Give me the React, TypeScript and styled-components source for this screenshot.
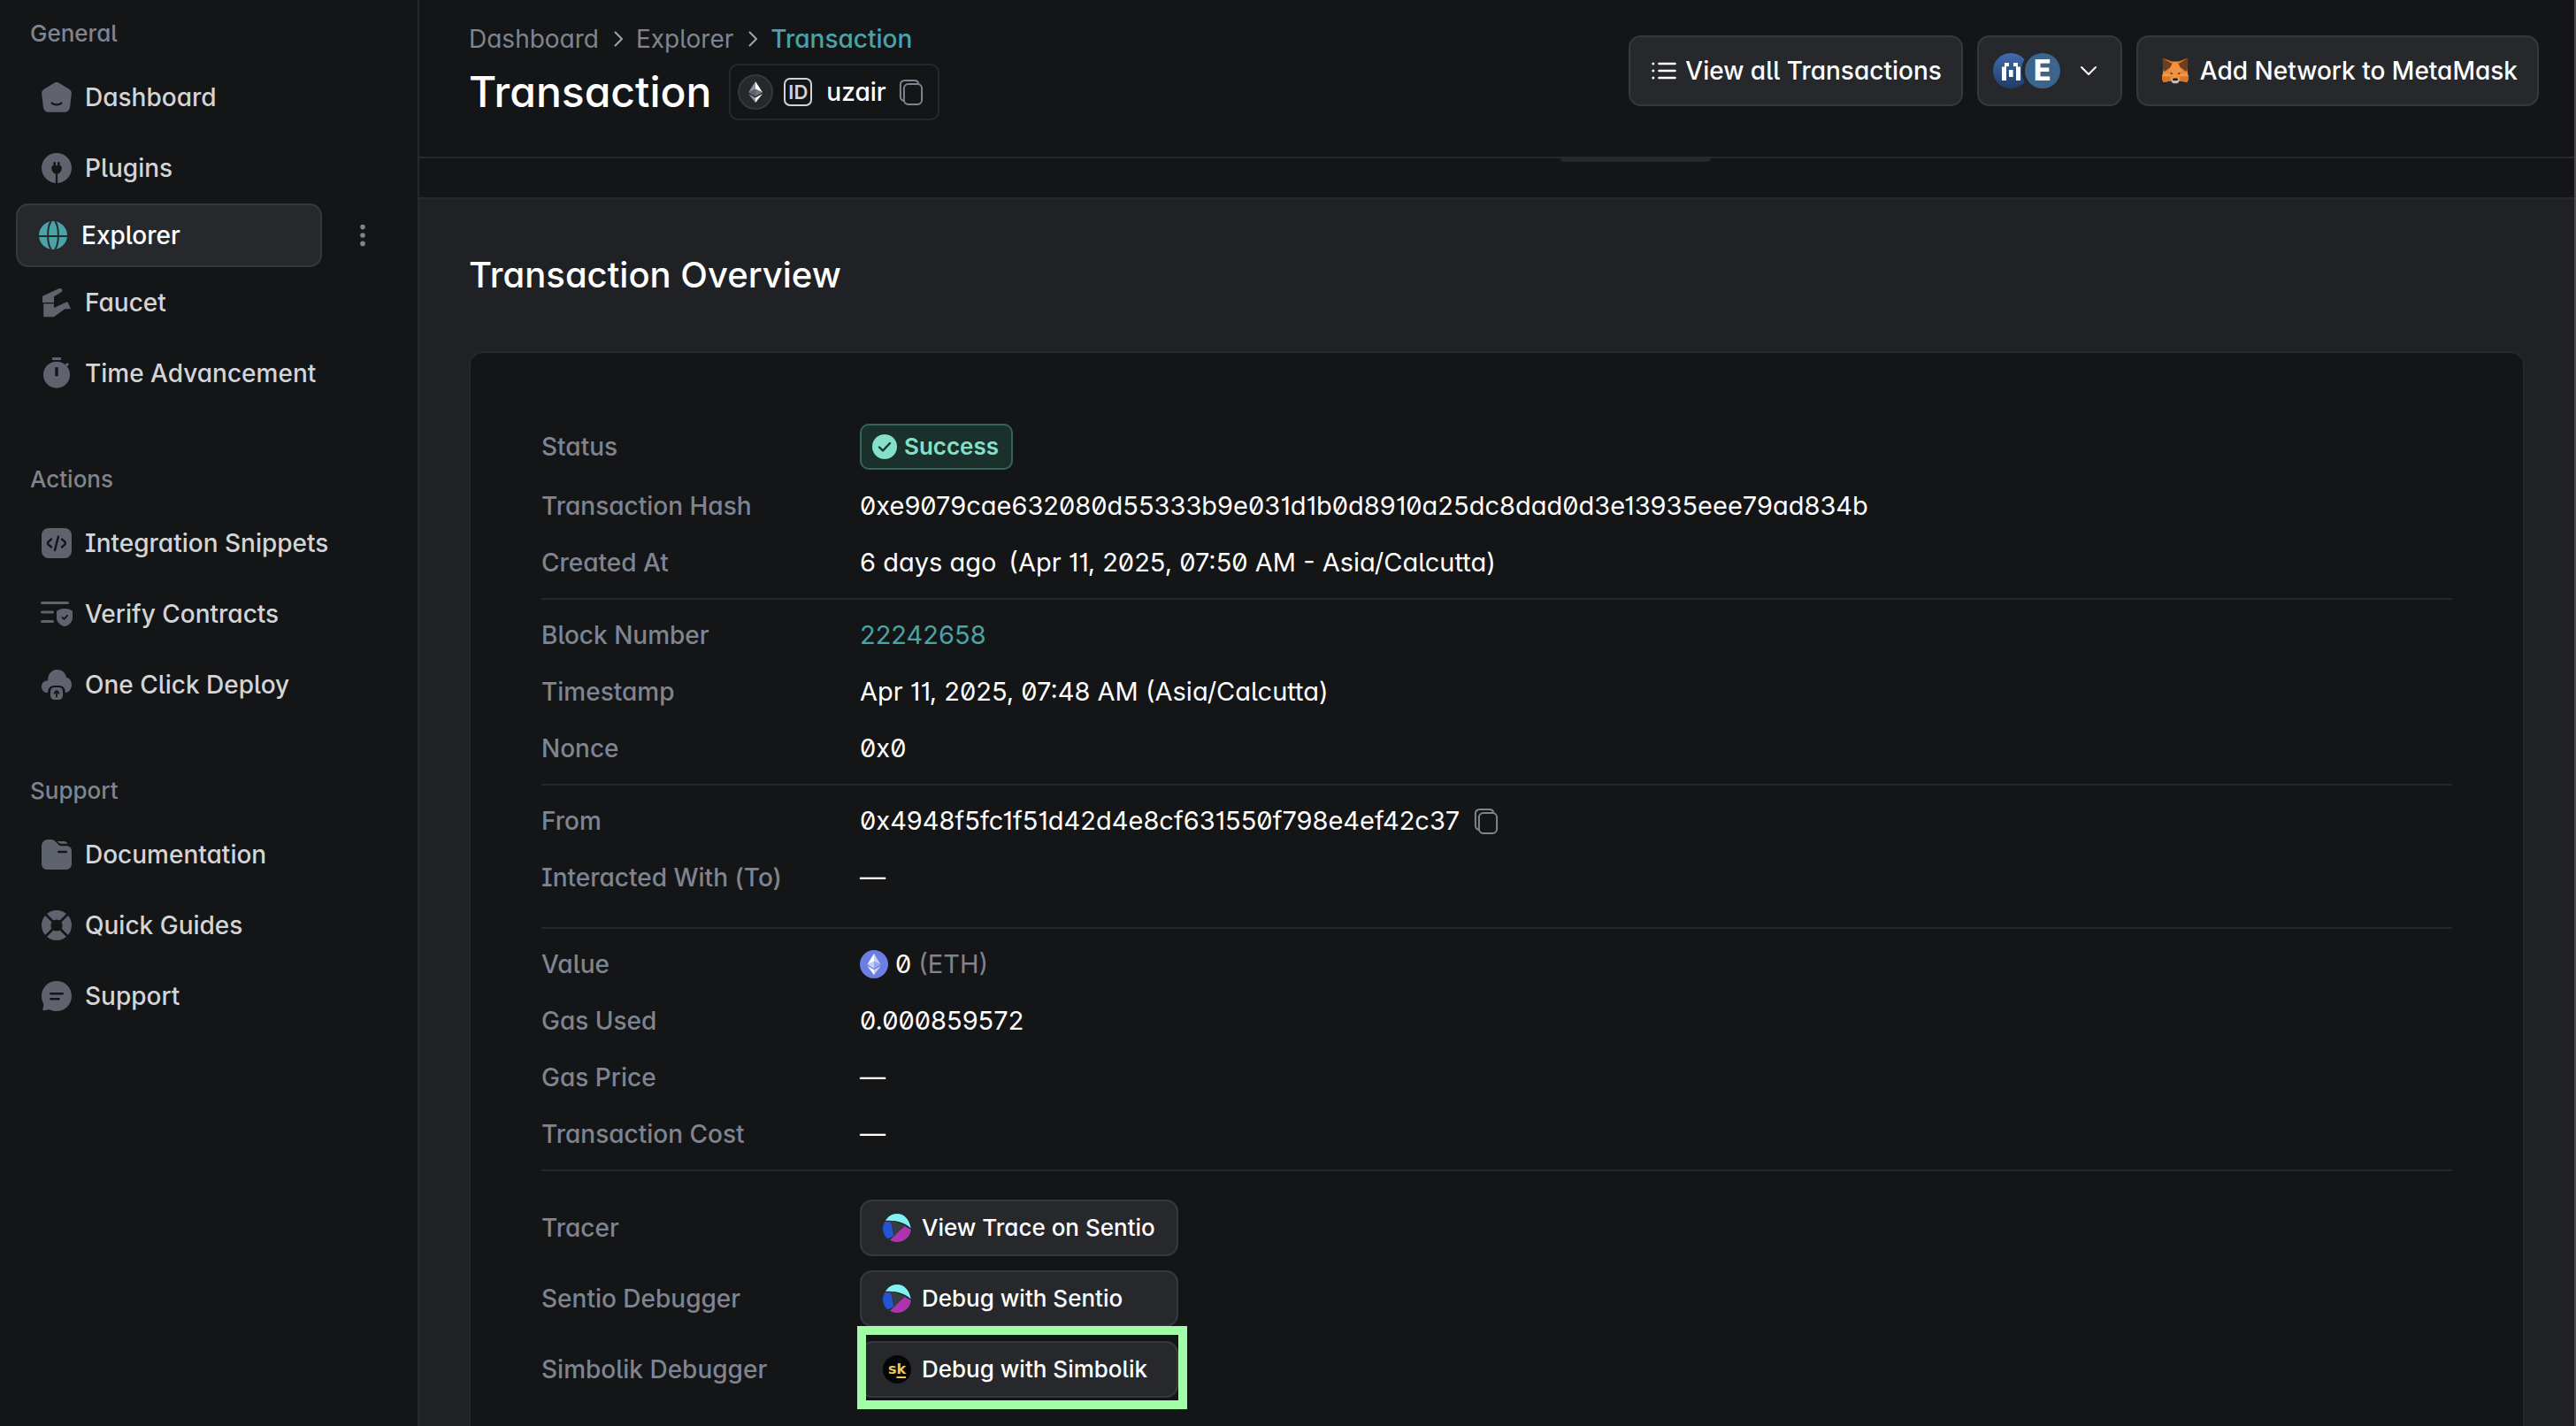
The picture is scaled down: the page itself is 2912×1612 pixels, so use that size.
import React from 'react';
import styled, { createGlobalStyle, css } from 'styled-components';

const color = {
  bg: '#141517',
  surface: '#27282c',
  content: '#202125',
  line: '#27282b',
  edge: '#37383e',
  icon: '#5f636e',
  muted: '#7f8490',
  text: '#d3d4d6',
  white: '#ffffff',
  teal: '#4aa3a6',
  mint: '#85e0cb',
};

const GlobalStyle = createGlobalStyle`
  *, *::before, *::after { box-sizing: border-box; }
  body {
    margin: 0;
    background: ${color.bg};
    color: ${color.white};
    font-family: Inter, "Noto Sans", sans-serif;
    font-size: 28px;
    font-weight: 400;
    line-height: 40px;
    font-feature-settings: 'cv11', 'zero', 'cv01', 'cv05', 'cv08';
  }
  button {
    font: inherit;
    font-feature-settings: inherit;
    color: inherit;
    cursor: pointer;
  }
  a { color: inherit; text-decoration: none; }
  h1, h2, p, ul, ol, dl, dd { margin: 0; padding: 0; }
  ul, ol { list-style: none; }
  svg { display: block; flex: none; }
`;

const Shell = styled.div`
  display: grid;
  grid-template-columns: 474px minmax(0, 1fr);
  height: 100vh;
  overflow: hidden;
  border-right: 2px solid #4b4956;
`;

/* ---------- Sidebar ---------- */

const Sidebar = styled.nav`
  display: flex;
  flex-direction: column;
  gap: 64px;
  padding-top: 22px;
  border-right: 2px solid ${color.line};
`;

const NavTitle = styled.h2`
  margin-bottom: 16px;
  padding-left: 34px;
  font-size: 26px;
  font-weight: 500;
  line-height: 32px;
  color: ${color.muted};
`;

const NavRow = styled.li`
  display: flex;
  align-items: center;
  padding-left: 18px;
`;

const NavLink = styled.a<{ $active?: boolean }>`
  display: flex;
  align-items: center;
  flex: none;
  width: 346px;
  height: 80px;
  gap: 14px;
  padding-left: 28px;
  font-weight: 500;
  color: ${color.text};
  white-space: nowrap;

  > svg { color: ${color.icon}; }

  ${p => p.$active && css`
    height: 72px;
    gap: 16px;
    padding-left: 24px;
    border: 2px solid ${color.edge};
    border-radius: 14px;
    background: ${color.surface};
    color: ${color.white};
    > svg { color: ${color.teal}; }
  `}
`;

const IconButton = styled.button`
  display: flex;
  align-items: center;
  justify-content: center;
  width: 32px;
  height: 32px;
  padding: 0;
  border: 0;
  background: none;
  color: ${color.muted};
`;

const MoreButton = styled(IconButton)`
  margin-left: 30px;
`;

/* ---------- Header ---------- */

const Main = styled.main`
  display: flex;
  flex-direction: column;
  min-width: 0;
  min-height: 0;
`;

const Header = styled.header`
  display: flex;
  justify-content: space-between;
  align-items: flex-start;
  flex: none;
  height: 179px;
  padding: 24px 40px 0 56px;
  border-bottom: 2px solid ${color.line};
`;

const Crumbs = styled.ol`
  display: flex;
  align-items: center;
  gap: 12px;
  color: ${color.muted};
`;

const Crumb = styled.li<{ $current?: boolean }>`
  display: flex;
  align-items: center;
  gap: 14px;
  ${p => p.$current && css`
    font-weight: 500;
    color: ${color.teal};
  `}
`;

const TitleRow = styled.div`
  display: flex;
  align-items: center;
  gap: 20px;
  margin-top: 8px;
`;

const Title = styled.h1`
  font-size: 48px;
  font-weight: 500;
  line-height: 64px;
`;

const Chip = styled.div`
  display: flex;
  align-items: center;
  height: 64px;
  gap: 12px;
  padding: 0 14px 0 8px;
  border: 2px solid ${color.line};
  border-radius: 10px;
  font-weight: 500;
`;

const ChipName = styled.span`
  padding-left: 4px;
`;

const ChainBadge = styled.span`
  display: flex;
  align-items: center;
  justify-content: center;
  width: 40px;
  height: 40px;
  border: 2px solid ${color.edge};
  border-radius: 50%;
  background: ${color.surface};
`;

const IdBadge = styled.span`
  display: flex;
  align-items: center;
  justify-content: center;
  width: 32px;
  height: 32px;
  border: 2px solid ${color.text};
  border-radius: 7px;
  font-size: 22px;
  font-weight: 600;
  line-height: 28px;
  color: ${color.text};
  font-feature-settings: normal;
`;

const Actions = styled.div`
  display: flex;
  gap: 16px;
  padding-top: 16px;
`;

const Button = styled.button<{ $compact?: boolean }>`
  display: flex;
  align-items: center;
  gap: ${p => (p.$compact ? '12px' : '8px')};
  height: ${p => (p.$compact ? '64px' : '80px')};
  width: ${p => (p.$compact ? '360px' : 'auto')};
  padding: 0 ${p => (p.$compact ? '24px' : '22px')};
  border: 2px solid ${color.edge};
  border-radius: 14px;
  background: ${color.surface};
  font-size: ${p => (p.$compact ? '26px' : '28px')};
  font-weight: 500;
  color: ${color.white};
  white-space: nowrap;
`;

const PickerButton = styled(Button)`
  gap: 20px;
  padding: 0 24px 0 16px;
`;

const Avatars = styled.span`
  display: flex;
`;

const Avatar = styled.span<{ $tone: string }>`
  display: flex;
  align-items: center;
  justify-content: center;
  width: 40px;
  height: 40px;
  border-radius: 50%;
  background: ${p => p.$tone};
  font-size: 32px;
  font-weight: 800;
  line-height: 40px;

  & + & {
    margin-left: -4px;
    box-shadow: 0 0 0 4px ${color.surface};
  }
`;

/* ---------- Content ---------- */

const TabStrip = styled.div`
  display: flex;
  justify-content: center;
  flex: none;
  height: 46px;
  padding-left: 314px;
  border-bottom: 2px solid ${color.line};
`;

const TabEnd = styled.span`
  width: 170px;
  height: 4px;
  border-radius: 0 0 8px 8px;
  background: ${color.line};
`;

const Content = styled.section`
  flex: 1;
  min-height: 0;
  padding: 60px 56px;
  overflow: hidden auto;
  scrollbar-width: none;
  background: ${color.content};
`;

const SectionTitle = styled.h2`
  margin-bottom: 60px;
  font-size: 40px;
  font-weight: 500;
  line-height: 52px;
`;

const Card = styled.div`
  padding: 63px 80px;
  border: 2px solid ${color.line};
  border-radius: 16px;
  background: ${color.bg};
`;

const Group = styled.dl<{ $roomy?: boolean; $actions?: boolean }>`
  padding: 8px 0 ${p => (p.$roomy ? '24px' : '8px')};

  & + & { border-top: 2px solid ${color.line}; }

  ${p => p.$actions && css`
    display: grid;
    gap: 16px;
    padding-top: 32px;
  `}
`;

const Row = styled.div<{ $tall?: boolean }>`
  display: grid;
  grid-template-columns: 360px minmax(0, 1fr);
  align-items: center;
  min-height: ${p => (p.$tall ? '70px' : '64px')};
`;

const Label = styled.dt`
  font-weight: 500;
  color: ${color.muted};
`;

const Value = styled.dd`
  display: flex;
  align-items: center;
  gap: 14px;
  font-size: 29px;
  white-space: nowrap;
`;

const Amount = styled(Value)`
  gap: 8px;
`;

const Unit = styled.span`
  color: ${color.muted};
`;

const BlockLink = styled.a`
  color: ${color.teal};
`;

const StatusBadge = styled.span`
  display: flex;
  align-items: center;
  gap: 8px;
  height: 52px;
  padding: 0 14px 0 12px;
  border: 2px solid #376359;
  border-radius: 10px;
  background: #19302b;
  font-size: 26px;
  font-weight: 600;
  color: ${color.mint};
`;

const Highlighted = styled.div`
  position: relative;

  &::after {
    content: '';
    position: absolute;
    top: -17px;
    right: -10px;
    bottom: -13px;
    left: -3px;
    border: 10px solid #a2fda8;
    pointer-events: none;
  }
`;

const SimbolikMark = styled.span`
  display: flex;
  align-items: center;
  justify-content: center;
  width: 32px;
  height: 32px;
  border-radius: 50%;
  background: #060606;
  font-family: "DejaVu Sans", sans-serif;
  font-size: 16px;
  font-weight: 700;
  line-height: 20px;
  color: #f4c64a;

  u {
    text-decoration-thickness: 2px;
    text-underline-offset: 3px;
  }
  i {
    font-style: normal;
  }
`;

/* ---------- Icons ---------- */

type IconProps = { size?: number; box?: string; children: React.ReactNode };
const Icon = ({ size = 36, box = '0 0 36 36', children }: IconProps) => (
  <svg width={size} height={size} viewBox={box} fill="none" aria-hidden="true">
    {children}
  </svg>
);

const HomeIcon = () => (
  <Icon>
    <path fill="currentColor" d="M14.6 2.2a6 6 0 0 1 6.8 0l10.4 6.4c2.4 1.500 3.300 3.200 3 5.900l-1.600 13.700c-.6 4.600-2.600 6.500-7.200 6.500H10c-4.600 0-6.600-1.900-7.200-6.500L1.200 14.500c-.3-2.700.6-4.400 3-5.900z" />
    <path stroke={color.bg} strokeWidth="2.400" strokeLinecap="round" d="M12.800 24.600c3 2.200 7.400 2.200 10.400 0" />
  </Icon>
);

const PluginIcon = () => (
  <Icon>
    <circle cx="18" cy="18" r="17" fill="currentColor" />
    <path fill={color.bg} d="M12.200 17.200c0-1.200.9-2 2-2h.2v-3a1.300 1.300 0 0 1 2.600 0v3h2v-3a1.300 1.300 0 0 1 2.600 0v3h.2c1.100 0 2 .8 2 2 0 4-1.800 6.600-4.700 7.200V36h-2.200V24.400c-2.900-.6-4.700-3.200-4.700-7.200z" />
  </Icon>
);

const GlobeIcon = () => (
  <Icon size={32} box="0 0 32 32">
    <circle cx="16" cy="16" r="16" fill="currentColor" />
    <path stroke={color.surface} strokeWidth="2" d="M0 17h32M14 0C8.800 6 8.800 26 14 32M18 0c5.200 6 5.200 26 0 32" />
  </Icon>
);

const FaucetIcon = () => (
  <Icon>
    <path fill="currentColor" d="M2 10.800 20.500 2.200c1.500-.8 3 0 4 1.200-.2 1.800-1 2.600-2.200 3.300L15 11.200V18H2zM3.200 19.200H15V24l14.500-6.800 1.500 1 3 7h-6.600L14.800 34.200H3.200z" />
  </Icon>
);

const TimerIcon = () => (
  <Icon>
    <circle cx="18" cy="19.700" r="15" fill="currentColor" />
    <path fill="currentColor" d="M13 0h10v3H13zM27.500 8.300l2.400-2.400 2.200 2.200-2.400 2.400z" />
    <path fill={color.bg} d="M16.300 11.200h3.400v10h-3.400z" />
  </Icon>
);

const CodeIcon = () => (
  <Icon>
    <rect x="1" y="1" width="34" height="34" rx="8" fill="currentColor" />
    <path stroke={color.bg} strokeWidth="2.400" strokeLinecap="round" strokeLinejoin="round" d="m12 13.500-3.200 2.800c-1 1-1 2.400 0 3.400L12 22.500M24 13.500l3.200 2.800c1 1 1 2.400 0 3.400L24 22.500M20 10.500l-4 15.500" />
  </Icon>
);

const VerifyIcon = () => (
  <Icon>
    <path stroke="currentColor" strokeWidth="3" strokeLinecap="round" d="M1.500 5.500h29M1.500 16h12M1.500 26.500h12" />
    <path fill="currentColor" d="M27 12c3.600 0 9 1.600 9 3.800v7c0 4-4.600 9.200-9 9.200s-9-5.200-9-9.200v-7C18 13.600 23.400 12 27 12z" />
    <path stroke={color.bg} strokeWidth="1.800" strokeLinecap="round" strokeLinejoin="round" d="m24.500 22 2 1.900 3.500-4" />
  </Icon>
);

const DeployIcon = () => (
  <Icon>
    <path fill="currentColor" d="M18.500 1c5.600 0 9.900 3.600 10.300 8.800 3.700.6 6.200 4 6.200 8.200 0 4.600-2.800 8.500-7 9.200-.2-5.600-2.800-8.200-8.300-8.200h-3.400c-5.500 0-8 2.600-8.300 8.200C3.800 27.200 1 24.200 1 20.200c0-3.800 2.800-6.700 7.200-6.900C7.800 6 12.500 1 18.500 1z" />
    <rect x="11" y="21" width="14" height="14" rx="4.500" fill="currentColor" />
    <path stroke={color.bg} strokeWidth="1.800" strokeLinecap="round" strokeLinejoin="round" d="M18 31.500v-6M15.500 27.500l2.500-2.500 2.500 2.500" />
  </Icon>
);

const FolderIcon = () => (
  <Icon>
    <path fill="currentColor" d="M1 9c0-5 3-8 7.500-8h2.800c2.800 0 4.400 1 6 3l2.500 2.600c1 1.200 2 1.600 3.600 1.600h5.200C33 8.200 35 10.500 35 14v14c0 4.600-2.400 7-7 7H8c-4.600 0-7-2.400-7-7z" />
    <path fill="currentColor" d="M18.500 3H26c2.200 0 3.600.8 4 3-1.500-.3-3.200-.3-5.400-.3-2 0-2.800.1-3.800-.7z" />
    <path stroke={color.bg} strokeWidth="2.400" strokeLinecap="round" d="M20.200 15h8.600" />
  </Icon>
);

const BuoyIcon = () => (
  <Icon>
    <circle cx="18" cy="18" r="11.800" stroke="currentColor" strokeWidth="10.400" />
    <path stroke={color.bg} strokeWidth="2.600" d="m5 5 26 26M31 5 5 31" />
  </Icon>
);

const ChatIcon = () => (
  <Icon>
    <path fill="currentColor" d="M18 1c9.600 0 17 7.400 17 17s-7.400 17-17 17c-2.600 0-5-.6-7.600-1.600-2.200-.6-4.600 1-6.800.8-1.200-.2-1.600-1-1.200-2.200.6-2 1.300-3.800.6-5.800C1.600 23.600 1 21 1 18 1 8.400 8.400 1 18 1z" />
    <path stroke={color.bg} strokeWidth="2.400" strokeLinecap="round" d="M11.200 15.300h13.600M11.200 21.300h9.400" />
  </Icon>
);

const DotsIcon = () => (
  <Icon size={32} box="0 0 32 32">
    <g fill="currentColor">
      <circle cx="16" cy="6.600" r="2.800" />
      <circle cx="16" cy="16" r="2.800" />
      <circle cx="16" cy="25.400" r="2.800" />
    </g>
  </Icon>
);

const CrumbArrow = () => (
  <svg width="16" height="20" viewBox="0 0 16 20" fill="none" aria-hidden="true">
    <path stroke="#a3a5ab" strokeWidth="2" strokeLinecap="round" strokeLinejoin="round" d="m4.500 2.500 7.500 7.500-7.500 7.500" />
  </svg>
);

const ChevronDown = () => (
  <Icon size={24} box="0 0 24 24">
    <path stroke={color.white} strokeWidth="2" strokeLinecap="round" strokeLinejoin="round" d="m4 8 8 8 8-8" />
  </Icon>
);

const CopyIcon = () => (
  <Icon size={32} box="0 0 32 32">
    <path stroke="currentColor" strokeWidth="2" strokeLinejoin="round" d="M7.800 26C5 25.500 3.900 24 3.900 21V8c0-3.400 1.700-5.100 5.100-5.100h10.500c2.800 0 4.300 1 4.900 3.600" />
    <rect x="7.900" y="6.900" width="20.200" height="23.200" rx="5" stroke="currentColor" strokeWidth="2" />
  </Icon>
);

const ListIcon = () => (
  <Icon size={32} box="0 0 32 32">
    <path stroke={color.white} strokeWidth="2.600" strokeLinecap="round" d="M10.500 8h18M10.500 16h18M10.500 24h18" />
    <g fill={color.white}>
      <circle cx="3.800" cy="8" r="1.500" />
      <circle cx="3.800" cy="16" r="1.500" />
      <circle cx="3.800" cy="24" r="1.500" />
    </g>
  </Icon>
);

const EthGlyph = () => (
  <svg width="16" height="24" viewBox="0 0 16 24" aria-hidden="true">
    <path fill="#8e93a6" d="M8 0 0 12.400 8 8.800z" />
    <path fill="#fff" d="m8 0 8 12.400-8-3.600z" />
    <path fill="#5f636e" d="M8 8.800 0 12.400 8 17z" />
    <path fill="#6d7180" d="m8 8.800 8 3.600L8 17z" />
    <path fill="#8e93a6" d="M0 14 8 24v-5.400z" />
    <path fill="#fff" d="M16 14 8 24v-5.400z" />
  </svg>
);

const EthCoin = () => (
  <Icon size={32} box="0 0 32 32">
    <circle cx="16" cy="16" r="16" fill="#6b7fe3" />
    <path fill="#fff" d="M16 4 8.500 16.300 16 12.900z" />
    <path fill="#c9d0f6" d="m16 4 7.500 12.300L16 12.900z" />
    <path fill="#c9d0f6" d="m16 12.900-7.500 3.400L16 20.700z" />
    <path fill="#98a6ed" d="m16 12.900 7.500 3.400L16 20.700z" />
    <path fill="#fff" d="m8.500 17.900 7.500 10.300v-6z" />
    <path fill="#c9d0f6" d="M23.500 17.900 16 28.200v-6z" />
  </Icon>
);

const CheckCircle = () => (
  <Icon size={28} box="0 0 28 28">
    <circle cx="14" cy="14" r="14" fill={color.mint} />
    <path stroke="#19302b" strokeWidth="2.400" strokeLinecap="round" strokeLinejoin="round" d="m8 14.500 4 4 8-8.500" />
  </Icon>
);

const NetworkLogo = () => (
  <Icon size={40} box="0 0 40 40">
    <path fill={color.white} d="M10 31V15.500h3V11h5v4h-3v16zM31 31V15.500h-3V11h-5v4h3v16zM18 19h4.600v8H18z" />
  </Icon>
);

const FoxIcon = () => (
  <svg width="40" height="30" viewBox="-5 0 40 30" aria-hidden="true">
    <path fill="#e8883a" d="M3 4.500h24l2.500 15.500.5 4-1.500 4-8.500-1.500-5 2-5-2L1.500 28 0 24l.500-4z" />
    <path fill="#f0923f" d="M11 5h8l3 10-2.500 9h-9L8 15z" />
    <path fill="#6d3f1f" d="M.600.800 12 5.500 9.500 11 2.800 16 1 12.500z" />
    <path fill="#6d3f1f" d="M29.400.800 18 5.500l2.500 5.500 6.700 5 1.800-3.500z" />
    <path fill="#e2761b" d="M.600.500 12.500 5 11 7zM29.400.500 17.500 5 19 7z" />
    <path fill="#d9762c" d="m0 20.500 9 .5 1 5.500L1.500 28 0 24zM30 20.500l-9 .5-1 5.500 8.500 1.500 1.500-4z" />
    <path fill="#f39a4a" d="m2.500 17.500 7.500 1.500-1 2.500-9-.5zM27.500 17.500 20 19l1 2.500 9-.5z" />
    <path fill="#4a3420" d="m9.500 16.500 3.200 1.800-2.700.9zM20.500 16.500l-3.200 1.800 2.700.9z" />
    <path fill="#cbbcae" d="M10 24.500h10l-1.200 3.800-1.800.9h-4l-1.800-.9z" />
    <path fill="#1b1b1b" d="M12.600 23.400h4.800l.7 2.600h-6.200z" />
  </svg>
);

const SentioIcon = () => (
  <Icon size={32} box="0 0 32 32">
    <path fill="#393b43" d="M9 7.500 27 14 13 26z" />
    <path fill="#7df3f5" d="M3 8C5.500 3 10.500 0 16 0c8 0 13.500 5.500 15.800 16.500C25 10.500 15 7 3 8z" />
    <path fill="#2455d0" d="M2.500 9h5c1 0 1.600.500 1.900 1.500L12.500 25 5.800 28.500C1.500 25.500 0 21 0 16.500 0 13.500.9 11 2.500 9z" />
    <path fill="#ad33b0" d="M24.500 14.200 31.900 18C31 26 24.500 32 16 32c-3 0-5.700-.9-8-2.300z" />
  </Icon>
);

/* ---------- Page ---------- */

type NavItem = { label: string; icon: React.ReactNode; active?: boolean };

const navigation: { title: string; items: NavItem[] }[] = [
  {
    title: 'General',
    items: [
      { label: 'Dashboard', icon: <HomeIcon /> },
      { label: 'Plugins', icon: <PluginIcon /> },
      { label: 'Explorer', icon: <GlobeIcon />, active: true },
      { label: 'Faucet', icon: <FaucetIcon /> },
      { label: 'Time Advancement', icon: <TimerIcon /> },
    ],
  },
  {
    title: 'Actions',
    items: [
      { label: 'Integration Snippets', icon: <CodeIcon /> },
      { label: 'Verify Contracts', icon: <VerifyIcon /> },
      { label: 'One Click Deploy', icon: <DeployIcon /> },
    ],
  },
  {
    title: 'Support',
    items: [
      { label: 'Documentation', icon: <FolderIcon /> },
      { label: 'Quick Guides', icon: <BuoyIcon /> },
      { label: 'Support', icon: <ChatIcon /> },
    ],
  },
];

const Field = ({ label, children }: { label: string; children: React.ReactNode }) => (
  <Row>
    <Label>{label}</Label>
    <Value>{children}</Value>
  </Row>
);

export default function App() {
  return (
    <>
      <GlobalStyle />
      <Shell>
        <Sidebar aria-label="Main">
          {navigation.map(section => (
            <div key={section.title}>
              <NavTitle>{section.title}</NavTitle>
              <ul>
                {section.items.map(item => (
                  <NavRow key={item.label}>
                    <NavLink href="#" $active={item.active} aria-current={item.active ? 'page' : undefined}>
                      {item.icon}
                      {item.label}
                    </NavLink>
                    {item.active && (
                      <MoreButton aria-label="More options">
                        <DotsIcon />
                      </MoreButton>
                    )}
                  </NavRow>
                ))}
              </ul>
            </div>
          ))}
        </Sidebar>

        <Main>
          <Header>
            <div>
              <Crumbs>
                <Crumb><a href="#">Dashboard</a><CrumbArrow /></Crumb>
                <Crumb><a href="#">Explorer</a><CrumbArrow /></Crumb>
                <Crumb $current><a href="#" aria-current="page">Transaction</a></Crumb>
              </Crumbs>
              <TitleRow>
                <Title>Transaction</Title>
                <Chip>
                  <ChainBadge><EthGlyph /></ChainBadge>
                  <IdBadge>ID</IdBadge>
                  <ChipName>uzair</ChipName>
                  <IconButton aria-label="Copy ID"><CopyIcon /></IconButton>
                </Chip>
              </TitleRow>
            </div>
            <Actions>
              <Button><ListIcon />View all Transactions</Button>
              <PickerButton aria-label="Choose network">
                <Avatars>
                  <Avatar $tone="linear-gradient(#3f6cb0, #213c66)"><NetworkLogo /></Avatar>
                  <Avatar $tone="#3b658c">E</Avatar>
                </Avatars>
                <ChevronDown />
              </PickerButton>
              <Button><FoxIcon />Add Network to MetaMask</Button>
            </Actions>
          </Header>

          <TabStrip><TabEnd /></TabStrip>

          <Content>
            <SectionTitle>Transaction Overview</SectionTitle>
            <Card>
              <Group>
                <Row $tall>
                  <Label>Status</Label>
                  <Value><StatusBadge><CheckCircle />Success</StatusBadge></Value>
                </Row>
                <Field label="Transaction Hash">0xe9079cae632080d55333b9e031d1b0d8910a25dc8dad0d3e13935eee79ad834b</Field>
                <Field label="Created At">
                  <span>6 days ago</span>
                  <span>(Apr 11, 2025, 07:50 AM - Asia/Calcutta)</span>
                </Field>
              </Group>
              <Group>
                <Field label="Block Number"><BlockLink href="#">22242658</BlockLink></Field>
                <Field label="Timestamp">Apr 11, 2025, 07:48 AM (Asia/Calcutta)</Field>
                <Field label="Nonce">0x0</Field>
              </Group>
              <Group $roomy>
                <Field label="From">
                  0x4948f5fc1f51d42d4e8cf631550f798e4ef42c37
                  <IconButton aria-label="Copy address"><CopyIcon /></IconButton>
                </Field>
                <Field label="Interacted With (To)">—</Field>
              </Group>
              <Group>
                <Row>
                  <Label>Value</Label>
                  <Amount><EthCoin /><span>0</span><Unit>(ETH)</Unit></Amount>
                </Row>
                <Field label="Gas Used">0.000859572</Field>
                <Field label="Gas Price">—</Field>
                <Field label="Transaction Cost">—</Field>
              </Group>
              <Group $actions>
                <Field label="Tracer"><Button $compact><SentioIcon />View Trace on Sentio</Button></Field>
                <Field label="Sentio Debugger"><Button $compact><SentioIcon />Debug with Sentio</Button></Field>
                <Field label="Simbolik Debugger">
                  <Highlighted>
                    <Button $compact>
                      <SimbolikMark aria-hidden="true"><i>s</i><u>k</u></SimbolikMark>
                      Debug with Simbolik
                    </Button>
                  </Highlighted>
                </Field>
              </Group>
            </Card>
          </Content>
        </Main>
      </Shell>
    </>
  );
}
